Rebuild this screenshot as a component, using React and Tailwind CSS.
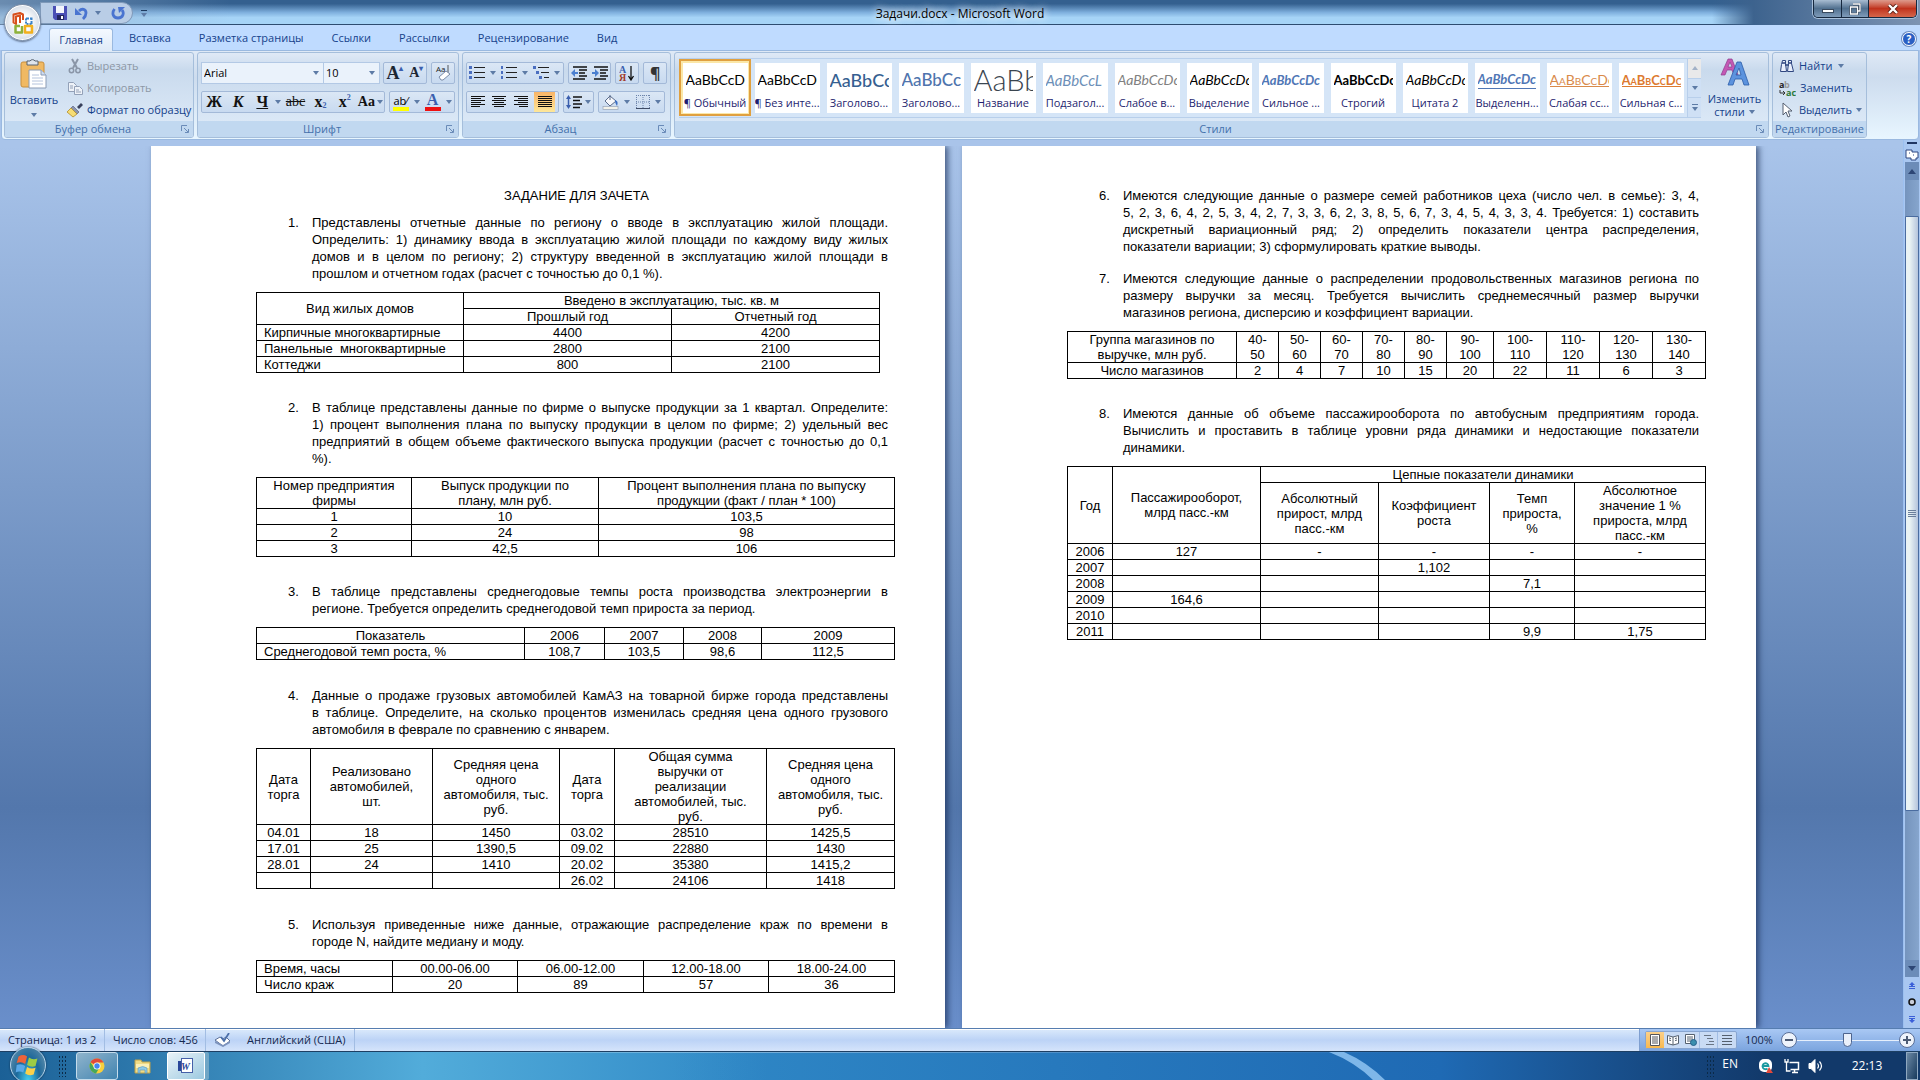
import React from "react";

const ui = "font-['Open_Sans',sans-serif]";

const tabs = ["Вставка", "Разметка страницы", "Ссылки", "Рассылки", "Рецензирование", "Вид"];

const styleTiles = [
  { label: "¶ Обычный", sample: "AaBbCcDc", look: "text-[14px] text-black", active: true },
  { label: "¶ Без инте...", sample: "AaBbCcDc", look: "text-[14px] text-black" },
  { label: "Заголово...", sample: "AaBbCc", look: "text-[18px] font-medium text-[#365f91]" },
  { label: "Заголово...", sample: "AaBbCc", look: "text-[17px] font-medium text-[#4f74ad]" },
  { label: "Название", sample: "AaBb", look: "text-[29px] font-light text-[#3a4550]" },
  { label: "Подзагол...", sample: "AaBbCcL", look: "text-[15px] italic text-[#6d8fb8]" },
  { label: "Слабое в...", sample: "AaBbCcDc", look: "text-[14px] italic text-[#808080]" },
  { label: "Выделение", sample: "AaBbCcDc", look: "text-[14px] italic text-black" },
  { label: "Сильное ...", sample: "AaBbCcDc", look: "text-[13px] italic font-bold text-[#4f76b5]" },
  { label: "Строгий", sample: "AaBbCcDc", look: "text-[13px] font-bold text-black" },
  { label: "Цитата 2", sample: "AaBbCcDc", look: "text-[14px] italic text-black" },
  { label: "Выделенн...", sample: "AaBbCcDc", look: "text-[13px] italic font-bold text-[#4f76b5] border-b border-[#4f76b5]" },
  { label: "Слабая сс...", sample: "AaBbCcDc", look: "text-[14px] [font-variant:small-caps] text-[#d98a4a] underline" },
  { label: "Сильная с...", sample: "AaBbCcDc", look: "text-[13px] [font-variant:small-caps] font-bold text-[#dd7a30] underline" },
];

/* ---------- ICONS ---------- */

function Arrow({ className = "" }) {
  return (
    <svg viewBox="0 0 6 4" className={`h-1 w-1.5 shrink-0 ${className}`}>
      <path d="M0 0h6L3 4z" fill="#5d7ba6" />
    </svg>
  );
}

function Lines({ rows, className = "" }) {
  return (
    <svg viewBox="0 0 16 12" className={`h-3 w-4 ${className}`} shapeRendering="crispEdges">
      {rows.map(([x, w], i) => (
        <rect key={i} x={x} y={i * 2} width={w} height="1" fill="#111" />
      ))}
    </svg>
  );
}

function OfficeLogo() {
  return (
    <svg viewBox="0 0 24 24" className="h-6 w-6" fill="none">
      <path d="M12 9V3.500L9 2 2.500 3.500v8L5 13V5.500l4-1V12" stroke="#d8501c" strokeWidth="2" strokeLinejoin="round" />
      <path d="M15 7.500h5.500V13" stroke="#3b83c9" strokeWidth="2" strokeDasharray="3 1" />
      <path d="M15 7.500V13h5.500" stroke="#3b83c9" strokeWidth="2" strokeDasharray="2 1" />
      <path d="M9 15H4.500v6.500H11V15" stroke="#8db13a" strokeWidth="2.500" strokeLinejoin="round" />
      <path d="M14 15h7v6.500h-7z" stroke="#f2b01e" strokeWidth="2.500" strokeLinejoin="round" />
    </svg>
  );
}

function SaveIcon() {
  return (
    <svg viewBox="0 0 14 14" className="h-3.5 w-3.5">
      <path d="M0 0h14v14H2L0 12z" fill="#4a4fb5" />
      <path d="M3 0h8v7H3z" fill="#f3f5fc" />
      <path d="M4 9h7v5H4z" fill="#23265f" />
      <path d="M8 10h2v3H8z" fill="#fff" />
    </svg>
  );
}

function UndoIcon() {
  return (
    <svg viewBox="0 0 14 14" className="h-3.5 w-3.5">
      <path d="M4 5c3-3 7-2 7 2 0 2-1 4-3 6" fill="none" stroke="#4a74d0" strokeWidth="2.800" />
      <path d="M0 2v7h7z" fill="#4a74d0" />
    </svg>
  );
}

function RedoIcon() {
  return (
    <svg viewBox="0 0 14 14" className="h-3.5 w-3.5">
      <path d="M3.500 3C.5 7 2 12 7 12s6.500-5 4-8" fill="none" stroke="#4a74d0" strokeWidth="2.800" />
      <path d="M7 1h7L8 7z" fill="#4a74d0" />
    </svg>
  );
}

function PasteIcon() {
  return (
    <svg viewBox="0 0 28 30" className="h-[30px] w-7">
      <rect x="1" y="3" width="23" height="25" rx="2" fill="#f0b963" stroke="#c98f3c" />
      <path d="M7 2h3a3 3 0 0 1 5 0h3v4H7z" fill="#dfe5ec" stroke="#59636f" />
      <path d="M9 11h12l5 5v13H9z" fill="#fff" stroke="#8a9bb5" />
      <path d="M21 11v5h5" fill="#cfdcf0" stroke="#8a9bb5" />
      <path d="M12 16h7M12 19h11M12 22h11M12 25h11" stroke="#b4c3dc" />
    </svg>
  );
}

function CutIcon() {
  return (
    <svg viewBox="0 0 16 16" className="h-4 w-4" fill="none" stroke="#8a96a8" strokeWidth="1.500">
      <path d="M5 1l5 9M11 1l-5 9" strokeWidth="2" />
      <circle cx="4.500" cy="12.500" r="2.200" />
      <circle cx="11" cy="12.500" r="2.200" />
    </svg>
  );
}

function CopyIcon() {
  return (
    <svg viewBox="0 0 16 16" className="h-4 w-4" fill="#eef2f8" stroke="#93a1b8">
      <path d="M1.500 2.500h5l3 3v6h-8z" />
      <path d="M7.500 6.500h5l3 3v5h-8z" />
      <path d="M3 6h3M3 8h3M9 10h3M9 12h5" />
    </svg>
  );
}

function BrushIcon() {
  return (
    <svg viewBox="0 0 16 16" className="h-4 w-4">
      <path d="M10 5l4-4 2 2-4 4z" fill="#39415c" />
      <path d="M6 4l6 6-2 2-6-6z" fill="#8c95ad" stroke="#50587a" strokeWidth=".6" />
      <path d="M4 6l6 6-4 3-6-5z" fill="#f6dd74" stroke="#b28d2a" strokeWidth=".8" />
    </svg>
  );
}

function EraserIcon() {
  return (
    <svg viewBox="0 0 18 18" className="h-[18px] w-[18px]">
      <text x="2" y="8" fontSize="8" fill="#222" fontFamily="Open Sans">Aa</text>
      <path d="M14 1v8" stroke="#333" strokeWidth=".8" />
      <path d="M5 13l7-6 4 3-7 6H7z" fill="#fff" stroke="#7a8ba8" />
    </svg>
  );
}

function BulletIcon({ numbered, multi }) {
  return (
    <svg viewBox="0 0 16 14" className="h-3.5 w-4" shapeRendering="crispEdges">
      {[1, 6, 11].map((y, i) => (
        <g key={y}>
          <rect x={multi ? i * 3 : 0} y={y - 1} width={numbered ? 2 : 3} height="3" fill="#4a6ec0" />
          <rect x={multi ? 5 + i * 3 : 5} y={y} width={multi ? 11 - i * 3 : 11} height="1" fill="#222" />
        </g>
      ))}
    </svg>
  );
}

function IndentIcon({ right }) {
  return (
    <svg viewBox="0 0 16 14" className="h-3.5 w-4">
      <path d="M2 1h14M8 4h8M8 7h6M8 10h8M2 13h12" stroke="#111" strokeWidth="1.500" />
      <path d={right ? "M0 6h3V3l4 4-4 4V8H0z" : "M7 6H4V3L0 7l4 4V8h3z"} fill="#4a7fd0" />
    </svg>
  );
}

function SortIcon() {
  return (
    <svg viewBox="0 0 16 16" className="h-4 w-4">
      <text x="0" y="8" fontSize="10" fontWeight="bold" fill="#3b5fae" fontFamily="Liberation Serif">А</text>
      <text x="0" y="16" fontSize="10" fontWeight="bold" fill="#a13a2c" fontFamily="Liberation Serif">Я</text>
      <path d="M12 1v13M9.500 11l2.500 4 2.500-4" fill="none" stroke="#111" strokeWidth="1.300" />
    </svg>
  );
}

function SpacingIcon() {
  return (
    <svg viewBox="0 0 16 16" className="h-4 w-4">
      <path d="M2.500 3v10" stroke="#3b5fae" strokeWidth="1.500" />
      <path d="M0 5l2.500-4L5 5zM0 11l2.500 4L5 11z" fill="#3b5fae" />
      <path d="M7 3h9M7 6.500h7M7 10h9M7 13.500h7" stroke="#111" strokeWidth="1.300" />
    </svg>
  );
}

function BucketIcon() {
  return (
    <svg viewBox="0 0 17 16" className="h-4 w-[17px]">
      <path d="M3 7l5-5 6 5-6 5z" fill="#f6f8fc" stroke="#5a6b8a" />
      <path d="M8 1v5" stroke="#5a6b8a" />
      <path d="M13 6c3 1 3 3 2 6-1-2-2-3-2-6z" fill="#3b6ec4" />
      <rect x="1" y="12.500" width="15" height="3" fill="#f2f2ea" stroke="#98a4b8" strokeWidth=".7" />
    </svg>
  );
}

function BorderIcon() {
  return (
    <svg viewBox="0 0 14 14" className="h-3.5 w-3.5">
      <path d="M.5 0v14M7 0v14M13.500 0v14M0 .5h14M0 7h14" stroke="#6d84ab" strokeDasharray="1 1" />
      <path d="M0 13.500h14" stroke="#3f4c66" />
    </svg>
  );
}

function ChangeStylesIcon() {
  return (
    <svg viewBox="0 0 30 28" className="h-7 w-[30px]">
      <path d="M1 17L8 1h4l6 16h-4l-2-5H7l-2 5zM8 9h4l-2-5z" fill="#c458b4" stroke="#8d3d8e" strokeWidth=".7" />
      <path d="M8 27L17 4h4l8 23h-5l-2-6h-7l-2 6zM16 17h5l-2-7z" fill="#5c93de" stroke="#2c5da8" strokeWidth=".8" />
    </svg>
  );
}

function BinocularsIcon() {
  return (
    <svg viewBox="0 0 16 16" className="h-4 w-4" fill="#e8eefb" stroke="#2f4680">
      <path d="M3.500 2.500h3v3l1 8h-6l1-7zM9.500 2.500h3v3l2 8h-6l1-8z" />
      <path d="M6 7h4M3 5h4M9 5h4" strokeWidth="1.500" />
    </svg>
  );
}

function ReplaceIcon() {
  return (
    <svg viewBox="0 0 17 17" className="h-[17px] w-[17px]" fontFamily="Open Sans" fontWeight="bold" fontSize="9">
      <text x="0" y="8" fill="#222">a</text>
      <text x="5" y="8" fill="#999">b</text>
      <text x="7" y="16" fill="#2b7a3a">ac</text>
      <path d="M1 10v3h5M4 11l2 2-2 2" fill="none" stroke="#333" />
    </svg>
  );
}

function CursorIcon() {
  return (
    <svg viewBox="0 0 16 16" className="h-4 w-4">
      <path d="M4 1v12l3-3 2 5 2-1-2-5h4z" fill="#fff" stroke="#555f70" />
    </svg>
  );
}

function Launcher() {
  return (
    <svg viewBox="0 0 8 8" className="h-2 w-2" fill="none" stroke="#6a8bb8">
      <path d="M.5 6V.5H6M3 3l4 4M7.500 4v3.500H4" />
    </svg>
  );
}

/* ---------- RIBBON ---------- */

function Group({ title, launcher, className = "", children }) {
  return (
    <section
      className={`flex shrink-0 flex-col overflow-hidden rounded-[3px] border border-[#a5bedb] bg-linear-to-b from-[#dfe9f6] from-0% via-[#c9daed] via-20% to-[#e0ecf9] ${className}`}
    >
      <div className="min-h-0 flex-1">{children}</div>
      <footer className="flex h-4 items-center bg-[#c1d8f0] text-[11px] text-[#4470ab]">
        <span className="flex-1 text-center whitespace-nowrap">{title}</span>
        {launcher && (
          <button aria-label={`${title}: параметры`} className="mr-1">
            <Launcher />
          </button>
        )}
      </footer>
    </section>
  );
}

function Cluster({ className = "", children }) {
  return (
    <div
      className={`flex h-[22px] items-center justify-around rounded-[2px] border border-[#a3b9d8] bg-linear-to-b from-[#dbe7f5] to-[#c8daf0] ${className}`}
    >
      {children}
    </div>
  );
}

function Tool({ label, className = "", children }) {
  return (
    <button aria-label={label} className={`flex h-5 items-center justify-center ${className}`}>
      {children}
    </button>
  );
}

function Clipboard() {
  return (
    <Group title="Буфер обмена" launcher className="w-[190px]">
      <div className="flex pt-0.5">
        <button className="flex w-[58px] flex-col items-center pt-1 text-[11px] text-[#15428b]">
          <PasteIcon />
          <span className="mt-0.5 leading-[18px]">Вставить</span>
          <Arrow className="mt-1" />
        </button>
        <div className="flex flex-col pl-1 text-[11px] text-[#15428b]">
          <button className="flex h-[22px] items-center gap-1 text-[#8d97a5]">
            <CutIcon /> Вырезать
          </button>
          <button className="flex h-[22px] items-center gap-1 text-[#8d97a5]">
            <CopyIcon /> Копировать
          </button>
          <button className="flex h-[22px] items-center gap-1 whitespace-nowrap">
            <BrushIcon /> Формат по образцу
          </button>
        </div>
      </div>
    </Group>
  );
}

function Combo({ label, value, className = "" }) {
  return (
    <label className={`relative flex h-[22px] items-center border border-[#b3c9e5] bg-[#eaf2fb] ${className}`}>
      <select aria-label={label} className="h-5 w-full appearance-none pl-0.5 text-[11px] text-black">
        <option>{value}</option>
      </select>
      <Arrow className="absolute right-1" />
    </label>
  );
}

function FontGroup() {
  return (
    <Group title="Шрифт" launcher className="w-[262px]">
      <div className="flex flex-col gap-[7px] px-[3px] pt-[9px]">
        <div className="flex">
          <Combo label="Шрифт" value="Arial" className="w-[124px]" />
          <Combo label="Размер шрифта" value="10" className="w-14 border-l-0" />
          <Cluster className="ml-[3px] w-[45px] font-['Liberation_Serif',serif] font-bold text-[#1d2733]">
            <Tool label="Увеличить размер">
              <span className="text-lg">A</span>
              <span className="self-start text-[8px] text-[#3b5fae]">▴</span>
            </Tool>
            <Tool label="Уменьшить размер">
              <span className="text-sm">A</span>
              <span className="self-start text-[8px] text-[#3b5fae]">▾</span>
            </Tool>
          </Cluster>
          <Cluster className="ml-1 w-6">
            <Tool label="Очистить формат">
              <EraserIcon />
            </Tool>
          </Cluster>
        </div>
        <div className="flex gap-1">
          <Cluster className="w-[184px] font-['Liberation_Serif',serif] text-base text-[#111]">
            <Tool label="Полужирный" className="w-[22px] font-bold">Ж</Tool>
            <Tool label="Курсив" className="w-[22px] font-bold italic">К</Tool>
            <Tool label="Подчеркнутый" className="w-[22px] font-bold underline">Ч</Tool>
            <Arrow />
            <Tool label="Зачеркнутый" className="w-6 text-sm line-through">abc</Tool>
            <Tool label="Подстрочный" className="w-[22px] font-bold">
              x<span className="self-end text-[8px] text-[#3b5fae]">2</span>
            </Tool>
            <Tool label="Надстрочный" className="w-[22px] font-bold">
              x<span className="self-start text-[8px] text-[#3b5fae]">2</span>
            </Tool>
            <Tool label="Регистр" className="gap-0.5 text-sm font-bold">
              Aa <Arrow />
            </Tool>
          </Cluster>
          <Cluster className="flex-1">
            <Tool label="Выделение цветом" className="flex-col">
              <span className="text-[11px] leading-[13px] text-black">ab⁄</span>
              <span className="h-1 w-4 bg-[#ffff00]" />
            </Tool>
            <Arrow />
            <Tool label="Цвет текста" className="flex-col font-['Liberation_Serif',serif] font-bold">
              <span className="text-base leading-[14px] text-[#3b5fae]">A</span>
              <span className="h-1 w-4 bg-[#ee1111]" />
            </Tool>
            <Arrow />
          </Cluster>
        </div>
      </div>
    </Group>
  );
}

function ParagraphGroup() {
  const full = [[1, 14], [1, 14], [1, 14], [1, 14], [1, 14], [1, 14]];
  return (
    <Group title="Абзац" launcher className="w-[209px]">
      <div className="flex flex-col gap-[7px] px-[3px] pt-[9px]">
        <div className="flex gap-1">
          <Cluster className="w-[99px]">
            <Tool label="Маркеры"><BulletIcon /></Tool>
            <Arrow />
            <Tool label="Нумерация"><BulletIcon numbered /></Tool>
            <Arrow />
            <Tool label="Многоуровневый список"><BulletIcon multi /></Tool>
            <Arrow />
          </Cluster>
          <Cluster className="w-11">
            <Tool label="Уменьшить отступ"><IndentIcon /></Tool>
            <Tool label="Увеличить отступ"><IndentIcon right /></Tool>
          </Cluster>
          <Cluster className="w-6">
            <Tool label="Сортировка"><SortIcon /></Tool>
          </Cluster>
          <Cluster className="w-6">
            <Tool label="Знаки абзаца" className="text-base font-bold text-[#333]">¶</Tool>
          </Cluster>
        </div>
        <div className="flex gap-1">
          <Cluster className="w-[93px]">
            <Tool label="По левому краю">
              <Lines rows={[[1, 14], [1, 10], [1, 14], [1, 10], [1, 14], [1, 9]]} />
            </Tool>
            <Tool label="По центру">
              <Lines rows={[[1, 14], [3, 10], [1, 14], [3, 10], [1, 14], [3, 10]]} />
            </Tool>
            <Tool label="По правому краю">
              <Lines rows={[[1, 14], [5, 10], [1, 14], [5, 10], [1, 14], [6, 9]]} />
            </Tool>
            <Tool label="По ширине" className="w-[21px] bg-linear-to-b from-[#f9b466] to-[#fde79a]">
              <Lines rows={full} />
            </Tool>
          </Cluster>
          <Cluster className="w-[31px]">
            <Tool label="Интервал"><SpacingIcon /></Tool>
            <Arrow />
          </Cluster>
          <Cluster className="w-[67px]">
            <Tool label="Заливка"><BucketIcon /></Tool>
            <Arrow />
            <Tool label="Границы"><BorderIcon /></Tool>
            <Arrow />
          </Cluster>
        </div>
      </div>
    </Group>
  );
}

function StylesGroup() {
  return (
    <Group title="Стили" launcher className="w-[1095px]">
      <div className="flex h-full">
        <div className="ml-1 mt-[5px] flex h-[60px] min-w-0 border-y border-[#b8cfeb] bg-[#d5e5f7]">
          <div className="flex overflow-hidden">
            {styleTiles.map((s, i) => (
              <button
                key={i}
                className={`h-[57px] w-[72px] shrink-0 p-px ${
                  s.active ? "border-2 border-[#e0a040] bg-[#fbe7a8]" : "border-2 border-transparent"
                }`}
              >
                <span className="mx-auto flex h-[50px] w-[65px] flex-col overflow-hidden bg-white pt-0.5 text-[#1f1f6f]">
                  <span className="flex h-[30px] w-[59px] items-center self-center overflow-hidden">
                    <span className={`font-['Lato',sans-serif] leading-[18px] whitespace-nowrap ${s.look}`}>
                      {s.sample}
                    </span>
                  </span>
                  <span className="text-center text-[11px] leading-4 whitespace-nowrap">{s.label}</span>
                </span>
              </button>
            ))}
          </div>
          <div className="flex w-3.5 shrink-0 flex-col border-l border-[#b8cfeb]">
            <button aria-label="Вверх" className="flex flex-1 items-center justify-center bg-[#e9e9ea]">
              <Arrow className="rotate-180 opacity-50" />
            </button>
            <button aria-label="Вниз" className="flex flex-1 items-center justify-center border-y border-[#b8cfeb] bg-[#cfe0f5]">
              <Arrow />
            </button>
            <button aria-label="Дополнительно" className="flex flex-1 flex-col items-center justify-center gap-0.5 bg-[#cfe0f5]">
              <span className="h-px w-1.5 bg-[#5d7ba6]" />
              <Arrow />
            </button>
          </div>
        </div>
        <button className="flex flex-1 flex-col items-center pt-[5px] text-[11px] leading-[13px] text-[#15428b]">
          <ChangeStylesIcon />
          <span className="mt-1.5">Изменить</span>
          <span className="flex items-center gap-1">
            стили <Arrow />
          </span>
        </button>
      </div>
    </Group>
  );
}

function EditingGroup() {
  return (
    <Group title="Редактирование" className="w-[95px]">
      <div className="flex flex-col pt-0.5 pl-1.5 text-[11px] text-[#15428b]">
        <button className="flex h-[22px] items-center gap-1">
          <BinocularsIcon /> Найти <Arrow className="ml-0.5" />
        </button>
        <button className="flex h-[22px] items-center gap-1">
          <ReplaceIcon /> Заменить
        </button>
        <button className="flex h-[22px] items-center gap-1">
          <CursorIcon /> Выделить <Arrow />
        </button>
      </div>
    </Group>
  );
}

/* ---------- WINDOW HEADER ---------- */

function TitleBar() {
  return (
    <header className="relative flex h-[25px] shrink-0 items-start bg-linear-to-b from-[#34608f] from-15% via-[#7fb0de] via-50% to-[#a6d4f7] to-70% shadow-[inset_0_-1px_0_#2d4c70]">
      <div className="absolute inset-0 bg-linear-to-r from-[#8fa9c6]/60 via-transparent via-12% to-transparent" />
      <div className="absolute inset-y-0 right-0 w-52 bg-linear-to-r from-transparent via-[#3d638e] via-20% to-[#7d94b3]" />
      <div className="relative ml-10 mt-0.5 flex h-[22px] w-[93px] items-center rounded-r-full border border-[#7f99b9] bg-[#b9cde6] pl-3">
        <button aria-label="Сохранить"><SaveIcon /></button>
        <button aria-label="Отменить" className="ml-2"><UndoIcon /></button>
        <Arrow className="ml-1.5" />
        <button aria-label="Повторить" className="ml-2.5"><RedoIcon /></button>
      </div>
      <button aria-label="Настройка панели" className="relative mt-2.5 ml-2 flex flex-col items-center gap-0.5">
        <span className="h-px w-1.5 bg-[#1d3a5f]" />
        <Arrow />
      </button>
      <h1 className="absolute inset-x-0 top-1 text-center text-xs leading-5 text-black [text-shadow:0_0_8px_#fff,0_0_8px_#fff]">
        Задачи.docx - Microsoft Word
      </h1>
      <div className="absolute top-0 right-[3px] flex h-[18px] overflow-hidden rounded-b-[5px] border border-t-0 border-[#16283f] shadow-[0_0_0_1px_#a8c0da]">
        <button aria-label="Свернуть" className="flex w-7 items-end justify-center border-r border-[#16283f] bg-linear-to-b from-[#a9bdd2] via-[#51708f] to-[#7f9cba] pb-1">
          <span className="h-1 w-3 border border-[#3a4a5e] bg-white" />
        </button>
        <button aria-label="Восстановить" className="flex w-[27px] items-center justify-center border-r border-[#16283f] bg-linear-to-b from-[#a9bdd2] via-[#51708f] to-[#7f9cba]">
          <svg viewBox="0 0 12 12" className="h-3 w-3" fill="none">
            <path d="M4 1h7v7H9M1.500 4h7v7h-7z" stroke="#2d3d52" strokeWidth="2.500" />
            <path d="M4 1h7v7H9M1.500 4h7v7h-7z" stroke="#fff" strokeWidth="1.300" />
          </svg>
        </button>
        <button aria-label="Закрыть" className="flex w-[47px] items-center justify-center bg-linear-to-b from-[#dd9a8c] via-[#c0321c] to-[#d5654a]">
          <svg viewBox="0 0 12 10" className="h-2.5 w-3">
            <path d="M2 1l8 8M10 1L2 9" stroke="#5c1d12" strokeWidth="4" />
            <path d="M2 1l8 8M10 1L2 9" stroke="#fff" strokeWidth="2.400" />
          </svg>
        </button>
      </div>
      <button
        aria-label="Кнопка Office"
        className="absolute top-1 left-1 z-10 flex h-[37px] w-[37px] items-center justify-center rounded-full border border-[#7d8fa8] bg-radial from-white from-30% to-[#b9c6d6] shadow-[inset_0_0_0_1px_#fff,0_1px_2px_#5a6c88]"
      >
        <OfficeLogo />
      </button>
    </header>
  );
}

function TabRow() {
  return (
    <nav className="flex h-[25px] shrink-0 items-end bg-[#bfdbff] pl-[49px] text-[11px] text-[#15428b]">
      <button className="z-[1] mr-0.5 -mb-px h-[23px] w-16 rounded-t-[3px] border border-b-0 border-[#9ab9e0] bg-linear-to-b from-[#f4f9ff] to-[#dfeaf7]">
        Главная
      </button>
      {tabs.map((t) => (
        <button key={t} className="h-[23px] px-3.5">
          {t}
        </button>
      ))}
      <button
        aria-label="Справка"
        className="mr-1 mb-1 ml-auto flex h-3.5 w-3.5 items-center justify-center rounded-full border border-white bg-[#2a5fc4] text-[10px] leading-none font-bold text-white shadow-[0_0_0_1px_#6d8cc0]"
      >
        ?
      </button>
    </nav>
  );
}

/* ---------- DOCUMENT ---------- */

function Task({ n, lines, className = "" }) {
  return (
    <div className={`flex pr-[57px] leading-[17px] ${className}`}>
      <span className="ml-8 w-6 shrink-0">{n}.</span>
      <p className="flex-1">
        {lines.map((l, i) => (
          <span
            key={i}
            className={`block whitespace-nowrap ${i < lines.length - 1 ? "[text-align-last:justify]" : ""}`}
          >
            {l}{" "}
          </span>
        ))}
      </p>
    </div>
  );
}

// A cell is a string, or { t, rs, cs, left } when it spans or aligns left
function DocTable({ cols, rows, className = "" }) {
  const total = cols.reduce((a, b) => a + b, 0);
  return (
    <table className={`table-fixed border-collapse text-center leading-[15px] ${className}`} style={{ width: total }}>
      <colgroup>
        {cols.map((w, i) => (
          <col key={i} style={{ width: w }} />
        ))}
      </colgroup>
      <tbody>
        {rows.map((row, r) => (
          <tr key={r} className="h-4">
            {row.map((c, i) => {
              const cell = typeof c === "string" ? { t: c } : c;
              return (
                <td
                  key={i}
                  rowSpan={cell.rs}
                  colSpan={cell.cs}
                  className={`border border-black align-middle whitespace-pre ${cell.left ? "pl-[7px] text-left" : ""}`}
                >
                  {cell.t}
                </td>
              );
            })}
          </tr>
        ))}
      </tbody>
    </table>
  );
}

function Page({ children }) {
  return (
    <article className="w-[794px] shrink-0 bg-white pt-[41px] pl-[105px] font-['Liberation_Sans',Arial,sans-serif] text-[13px] text-black shadow-[3px_0_6px_rgba(20,40,80,0.65)]">
      {children}
    </article>
  );
}

function PageOne() {
  return (
    <Page>
      <h2 className="pr-12 text-center leading-[17px]">ЗАДАНИЕ ДЛЯ ЗАЧЕТА</h2>
      <Task
        n={1}
        className="mt-2.5"
        lines={[
          "Представлены отчетные данные по региону о вводе в эксплуатацию жилой площади.",
          "Определить: 1) динамику ввода в эксплуатацию жилой площади по каждому виду жилых",
          "домов и в целом по региону; 2) структуру введенной в эксплуатацию жилой площади в",
          "прошлом и отчетном годах (расчет с точностью до 0,1 %).",
        ]}
      />
      <DocTable
        className="mt-2.5"
        cols={[207, 208, 208]}
        rows={[
          [{ t: "Вид жилых домов", rs: 2 }, { t: "Введено в эксплуатацию, тыс. кв. м", cs: 2 }],
          ["Прошлый год", "Отчетный год"],
          [{ t: "Кирпичные многоквартирные", left: true }, "4400", "4200"],
          [{ t: "Панельные  многоквартирные", left: true }, "2800", "2100"],
          [{ t: "Коттеджи", left: true }, "800", "2100"],
        ]}
      />
      <Task
        n={2}
        className="mt-[26px]"
        lines={[
          "В таблице представлены данные по фирме о выпуске продукции за 1 квартал. Определите:",
          "1) процент выполнения плана по выпуску продукции в целом по фирме; 2) удельный вес",
          "предприятий в общем объеме фактического выпуска продукции (расчет с точностью до 0,1",
          "%).",
        ]}
      />
      <DocTable
        className="mt-2.5"
        cols={[155, 187, 296]}
        rows={[
          ["Номер предприятия\nфирмы", "Выпуск продукции по\nплану, млн руб.", "Процент выполнения плана по выпуску\nпродукции (факт / план * 100)"],
          ["1", "10", "103,5"],
          ["2", "24", "98"],
          ["3", "42,5", "106"],
        ]}
      />
      <Task
        n={3}
        className="mt-[26px]"
        lines={[
          "В таблице представлены среднегодовые темпы роста производства электроэнергии в",
          "регионе. Требуется определить среднегодовой темп прироста за период.",
        ]}
      />
      <DocTable
        className="mt-2.5"
        cols={[268, 80, 79, 78, 133]}
        rows={[
          ["Показатель", "2006", "2007", "2008", "2009"],
          [{ t: "Среднегодовой темп роста, %", left: true }, "108,7", "103,5", "98,6", "112,5"],
        ]}
      />
      <Task
        n={4}
        className="mt-[27px]"
        lines={[
          "Данные о продаже грузовых автомобилей КамАЗ на товарной бирже города представлены",
          "в таблице. Определите, на сколько процентов изменилась средняя цена одного грузового",
          "автомобиля в феврале по сравнению с январем.",
        ]}
      />
      <DocTable
        className="mt-2.5"
        cols={[54, 122, 127, 55, 152, 128]}
        rows={[
          [
            "Дата\nторга",
            "Реализовано\nавтомобилей,\nшт.",
            "Средняя цена\nодного\nавтомобиля, тыс.\nруб.",
            "Дата\nторга",
            "Общая сумма\nвыручки от\nреализации\nавтомобилей, тыс.\nруб.",
            "Средняя цена\nодного\nавтомобиля, тыс.\nруб.",
          ],
          ["04.01", "18", "1450", "03.02", "28510", "1425,5"],
          ["17.01", "25", "1390,5", "09.02", "22880", "1430"],
          ["28.01", "24", "1410", "20.02", "35380", "1415,2"],
          ["", "", "", "26.02", "24106", "1418"],
        ]}
      />
      <Task
        n={5}
        className="mt-[27px]"
        lines={[
          "Используя приведенные ниже данные, отражающие распределение краж по времени в",
          "городе N, найдите медиану и моду.",
        ]}
      />
      <DocTable
        className="mt-2.5"
        cols={[136, 125, 126, 125, 126]}
        rows={[
          [{ t: "Время, часы", left: true }, "00.00-06.00", "06.00-12.00", "12.00-18.00", "18.00-24.00"],
          [{ t: "Число краж", left: true }, "20", "89", "57", "36"],
        ]}
      />
    </Page>
  );
}

function PageTwo() {
  return (
    <Page>
      <Task
        n={6}
        lines={[
          "Имеются следующие данные о размере семей работников цеха (число чел. в семье): 3, 4,",
          "5, 2, 3, 6, 4, 2, 5, 3, 4, 2, 7, 3, 3, 6, 2, 3, 8, 5, 6, 7, 3, 4, 5, 4, 3, 3, 4. Требуется: 1) составить",
          "дискретный вариационный ряд; 2) определить показатели центра распределения,",
          "показатели вариации;  3) сформулировать краткие выводы.",
        ]}
      />
      <Task
        n={7}
        className="mt-[15px]"
        lines={[
          "Имеются следующие данные о распределении продовольственных магазинов региона по",
          "размеру выручки за месяц. Требуется вычислить среднемесячный размер выручки",
          "магазинов региона, дисперсию и коэффициент вариации.",
        ]}
      />
      <DocTable
        className="mt-2.5"
        cols={[169, 42, 42, 42, 42, 42, 47, 53, 53, 53, 53]}
        rows={[
          ["Группа магазинов по\nвыручке, млн руб.", "40-\n50", "50-\n60", "60-\n70", "70-\n80", "80-\n90", "90-\n100", "100-\n110", "110-\n120", "120-\n130", "130-\n140"],
          ["Число магазинов", "2", "4", "7", "10", "15", "20", "22", "11", "6", "3"],
        ]}
      />
      <Task
        n={8}
        className="mt-[26px]"
        lines={[
          "Имеются данные об объеме пассажирооборота по автобусным предприятиям города.",
          "Вычислить и проставить в таблице уровни ряда динамики и недостающие показатели",
          "динамики.",
        ]}
      />
      <DocTable
        className="mt-2.5"
        cols={[45, 148, 118, 111, 85, 131]}
        rows={[
          [{ t: "Год", rs: 2 }, { t: "Пассажирооборот,\nмлрд пасс.-км", rs: 2 }, { t: "Цепные показатели динамики", cs: 4 }],
          ["Абсолютный\nприрост, млрд\nпасс.-км", "Коэффициент\nроста", "Темп\nприроста,\n%", "Абсолютное\nзначение 1 %\nприроста, млрд\nпасс.-км"],
          ["2006", "127", "-", "-", "-", "-"],
          ["2007", "", "", "1,102", "", ""],
          ["2008", "", "", "", "7,1", ""],
          ["2009", "164,6", "", "", "", ""],
          ["2010", "", "", "", "", ""],
          ["2011", "", "", "", "9,9", "1,75"],
        ]}
      />
    </Page>
  );
}

function ScrollBar() {
  return (
    <aside className="flex w-[17px] shrink-0 flex-col items-center border-l border-[#9cc0f0] bg-[#a9c7f1]">
      <span className="mt-0.5 h-0.5 w-2.5 shrink-0 bg-[#1f3563]" />
      <button aria-label="Линейка" className="mt-1 h-3.5">
        <svg viewBox="0 0 14 12" className="h-3 w-3.5" fill="#fff" stroke="#2f4680">
          <path d="M1 1h6v2h6v6h-2v2H6V9H1z" />
          <path d="M4 4h1M8 6h1" />
        </svg>
      </button>
      <div className="flex w-3.5 flex-1 flex-col bg-linear-to-r from-[#7594bd] to-[#86a5cd]">
        <button aria-label="Прокрутить вверх" className="flex h-[18px] items-center justify-center bg-[#6c8cb8]">
          <svg viewBox="0 0 8 5" className="h-[5px] w-2"><path d="M0 5h8L4 0z" fill="#2d4675" /></svg>
        </button>
        <div className="mt-9 flex h-[73%] flex-col items-center justify-center gap-px rounded-[1px] border border-[#4a6ca0] bg-linear-to-r from-[#eaf3f4] from-30% to-[#b5c4dc]">
          <span className="h-px w-2 bg-[#6b7f9c]" />
          <span className="h-px w-2 bg-[#6b7f9c]" />
          <span className="h-px w-2 bg-[#6b7f9c]" />
          <span className="h-px w-2 bg-[#6b7f9c]" />
        </div>
        <button aria-label="Прокрутить вниз" className="mt-auto flex h-[17px] items-center justify-center bg-[#6c8cb8]">
          <svg viewBox="0 0 8 5" className="h-[5px] w-2"><path d="M0 0h8L4 5z" fill="#2d4675" /></svg>
        </button>
      </div>
      <div className="flex h-[51px] flex-col items-center justify-around">
        <svg viewBox="0 0 6 7" className="h-[7px] w-1.5"><path d="M0 3l3-3 3 3H4v1h2v1H0V4h2V3zM0 6h6v1H0z" fill="#3b5fd8" /></svg>
        <svg viewBox="0 0 8 8" className="h-2 w-2"><circle cx="4" cy="4" r="3" fill="#c9cdd8" stroke="#111" strokeWidth="1.500" /></svg>
        <svg viewBox="0 0 6 7" className="h-[7px] w-1.5"><path d="M0 4l3 3 3-3H4V3h2V2H0v1h2v1zM0 0h6v1H0z" fill="#3b5fd8" /></svg>
      </div>
    </aside>
  );
}

/* ---------- STATUS BAR AND TASKBAR ---------- */

function StatusBar() {
  return (
    <footer className="flex h-[23px] shrink-0 items-stretch border-t border-[#567db0] bg-linear-to-b from-[#dbeafb] via-[#bcd3f6] via-50% to-[#d5e4fb] text-[11px] text-[#15294f] shadow-[inset_0_1px_0_#fff]">
      <span className="flex w-[105px] items-center border-r border-[#a2bde3] pl-2 whitespace-nowrap">Страница: 1 из 2</span>
      <span className="flex w-[101px] items-center border-r border-[#a2bde3] pl-2 whitespace-nowrap">Число слов: 456</span>
      <span className="flex w-[149px] items-center gap-4 border-r border-[#a2bde3] pl-2 whitespace-nowrap">
        <svg viewBox="0 0 17 14" className="h-3.5 w-[17px]">
          <path d="M1 7l5-3 3 2 3-2 4 4-7 5z" fill="#fff" stroke="#5a6f98" />
          <path d="M1 8v2l8 4 7-4V8l-7 4z" fill="#7d93bd" />
          <path d="M7 4l3 4 5-8" fill="none" stroke="#4a6ea8" strokeWidth="1.800" />
        </svg>
        Английский (США)
      </span>
      <div className="ml-auto flex w-[281px] items-center border-l border-[#7f9fd0] bg-linear-to-b from-[#a9c8f4] to-[#7ba4de] pl-[5px]">
        <div className="flex h-[18px] rounded-[2px] border border-[#88a5d0] bg-[#c9dbf4]">
          <button aria-label="Разметка страницы" className="flex w-[18px] items-center justify-center bg-linear-to-b from-[#fbd089] to-[#f8b84e]">
            <svg viewBox="0 0 12 12" className="h-3 w-3" fill="#fff" stroke="#55565c"><path d="M1.500.5h9v11h-9zM3 3h6M3 5h6M3 7h6M3 9h6" /></svg>
          </button>
          <button aria-label="Режим чтения" className="flex w-[18px] items-center justify-center">
            <svg viewBox="0 0 12 12" className="h-3 w-3" fill="#fff" stroke="#55606e"><path d="M.5 1.500L6 3l5.500-1.500v8L6 11 .5 9.500zM6 3v8M2 4l2 .5M2 6l2 .5M8 4.500L10 4M8 6.500L10 6" /></svg>
          </button>
          <button aria-label="Веб-документ" className="flex w-[18px] items-center justify-center border-r border-[#a2bde3]">
            <svg viewBox="0 0 12 12" className="h-3 w-3"><path d="M.5.5h9v9h-9zM2 3h6M2 5h6M2 7h4" fill="#fff" stroke="#55606e" /><circle cx="8.500" cy="8.500" r="3" fill="#3c8fae" stroke="#27618a" /></svg>
          </button>
          <button aria-label="Структура" className="flex w-[18px] items-center justify-center border-r border-[#a2bde3]">
            <svg viewBox="0 0 12 12" className="h-3 w-3" stroke="#6a7686"><path d="M1 1.500h7M4 4.500h6M6 7.500h5M3 10.500h8" /></svg>
          </button>
          <button aria-label="Черновик" className="flex w-[18px] items-center justify-center">
            <svg viewBox="0 0 12 12" className="h-3 w-3" stroke="#55606e"><path d="M1 1.500h10M1 4.500h10M1 7.500h10M1 10.500h10" /></svg>
          </button>
        </div>
        <span className="ml-2">100%</span>
        <button aria-label="Мельче" className="ml-2 flex h-4 w-4 items-center justify-center rounded-full border border-[#5a6f98] bg-[#eef3fb]">
          <span className="h-0.5 w-2 bg-[#4d5b74]" />
        </button>
        <input
          type="range"
          aria-label="Масштаб"
          defaultValue="50"
          className="h-4 w-[102px] appearance-none bg-[linear-gradient(#e6effc,#e6effc)] bg-[length:100%_1px] bg-center bg-no-repeat [&::-webkit-slider-thumb]:h-3.5 [&::-webkit-slider-thumb]:w-[9px] [&::-webkit-slider-thumb]:appearance-none [&::-webkit-slider-thumb]:rounded-b-full [&::-webkit-slider-thumb]:border [&::-webkit-slider-thumb]:border-[#4d648f] [&::-webkit-slider-thumb]:bg-[#e9effa]"
        />
        <button aria-label="Крупнее" className="flex h-4 w-4 items-center justify-center rounded-full border border-[#5a6f98] bg-[#eef3fb]">
          <svg viewBox="0 0 8 8" className="h-2 w-2"><path d="M3 0h2v3h3v2H5v3H3V5H0V3h3z" fill="#4d5b74" /></svg>
        </button>
      </div>
    </footer>
  );
}

function Grip({ className = "" }) {
  return (
    <span
      className={`h-[22px] w-2 bg-[radial-gradient(#0b2a48_1px,transparent_1px)] bg-[length:3px_4px] ${className}`}
    />
  );
}

function TaskBar() {
  return (
    <footer className="relative flex h-[29px] shrink-0 items-center border-t border-[#1d3f63] bg-[#2f88c6] shadow-[inset_0_1px_0_rgba(255,255,255,0.4)]">
      <div className="absolute inset-0 bg-linear-to-r from-[#1b6096] via-[#52acda] via-22% to-transparent to-40%" />
      <div className="absolute inset-0 bg-linear-to-r from-transparent from-35% via-[#1f6ab4] via-75% to-[#12396a] to-92%" />
      <svg viewBox="0 0 62 28" className="absolute left-[69%] h-7 w-[62px]">
        <path d="M4 0q26 10 44 28h12Q42 10 19 0z" fill="#8fc4f2" opacity=".85" />
      </svg>
      <button
        aria-label="Пуск"
        className="absolute -top-[5px] left-2.5 h-9 w-9 overflow-hidden rounded-full border border-[#b6d3e8] bg-radial-[at_50%_100%] from-[#45d3f5] via-[#1c6799] via-50% to-[#6d96b0] shadow-[0_0_2px_#0c2944]"
      >
        <svg viewBox="0 0 36 36" className="h-full w-full">
          <path d="M8 9q5-3 9 0l-2 8q-4-3-9-1z" fill="#ee6338" />
          <path d="M19 10q4 3 9 1l-2 8q-4 2-9-1z" fill="#9ccb45" />
          <path d="M6 18q5-2 9 1l-2 7q-4-2-8 0z" fill="#59a8e8" />
          <path d="M17 20q4 3 9 1l-2 7q-5 2-9-1z" fill="#fbd04a" />
        </svg>
      </button>
      <Grip className="relative ml-[58px]" />
      <button aria-label="Chrome" className="relative ml-2.5 flex h-7 w-[42px] items-center justify-center rounded-[3px] border border-[#c4dcec] bg-linear-to-br from-[#8fb4cc] to-[#3f84b0]">
        <svg viewBox="0 0 16 16" className="h-4 w-4">
          <circle cx="8" cy="8" r="7.500" fill="#f7cf3c" />
          <path d="M8 8L1.500 4.200A7.500 7.500 0 0 1 14.500 4.500H8z" fill="#e04b3a" />
          <path d="M1.500 4.200A7.500 7.500 0 0 0 7 15.400L10.500 9.500 5 9.500z" fill="#45a85a" />
          <circle cx="8" cy="8" r="3.500" fill="#fff" />
          <circle cx="8" cy="8" r="2.700" fill="#4385ee" />
        </svg>
      </button>
      <button aria-label="Проводник" className="relative flex h-7 w-[49px] items-center justify-center">
        <svg viewBox="0 0 17 15" className="h-[15px] w-[17px]">
          <path d="M1 1h6l1 2h8v11H1z" fill="#f0dc86" stroke="#bfa24a" />
          <path d="M2 5h13v4H2z" fill="#fbf0b8" />
          <path d="M4 14V9q5-3 9 0v5h-2v-3H6v3z" fill="#8fcbe8" stroke="#5a96b8" strokeWidth=".6" />
        </svg>
      </button>
      <button aria-label="Word" className="relative flex h-7 w-[38px] items-center justify-center rounded-[2px] border border-white bg-linear-to-br from-[#e9f3f8] to-[#9cc9e0] shadow-[4px_0_0_#6fa6c6]">
        <svg viewBox="0 0 16 16" className="h-4 w-4">
          <rect x="3.500" y=".5" width="11" height="14" fill="#fff" stroke="#4660a8" />
          <rect x="0" y="3" width="3" height="10" fill="#2a4799" />
          <text x="3" y="12" fontSize="10" fontStyle="italic" fontWeight="bold" fill="#2a4799" fontFamily="Liberation Serif">W</text>
        </svg>
      </button>
      <div className="relative ml-auto flex h-full items-center text-xs text-white">
        <Grip className="mr-2" />
        <span className="mb-1 mr-5">EN</span>
        <svg viewBox="0 0 16 16" className="mr-2.5 h-4 w-4">
          <rect x="1" y="1" width="13" height="13" rx="5" fill="#fff" />
          <path d="M4 8h6.500a3 3 0 1 0-1 2.500" fill="none" stroke="#1c9aa0" strokeWidth="1.800" />
          <path d="M11 9l4 6H8z" fill="#e3493b" />
        </svg>
        <svg viewBox="0 0 16 16" className="mr-2 h-4 w-4" fill="none" stroke="#fff">
          <path d="M5.500 4.500h9v7h-8M8 14.500h6M10.500 12v2" strokeWidth="1.500" />
          <path d="M1 1v3h3V1M2.500 4v9h4" strokeWidth="1.300" />
        </svg>
        <svg viewBox="0 0 16 16" className="mr-1 h-4 w-4" fill="none" stroke="#fff">
          <path d="M1 5.500h2l4-4v13l-4-4H1z" fill="#fff" />
          <path d="M9.500 5.500q2 2.500 0 5M11.500 3.500q4 4.500 0 9" strokeWidth="1.200" />
        </svg>
        <time className="w-[78px] text-center">22:13</time>
        <button aria-label="Свернуть все окна" className="mr-0.5 h-7 w-3 border border-[#8fa8c0] bg-linear-to-br from-[#6d8aa6] to-[#173a5c]" />
      </div>
    </footer>
  );
}

export default function App() {
  return (
    <div className={`flex h-screen flex-col overflow-hidden bg-[#a9c4ea] ${ui}`}>
      <TitleBar />
      <TabRow />
      <div className="mx-px flex h-[90px] shrink-0 gap-[3px] rounded-b-[4px] border border-[#9ab9e0] bg-linear-to-b from-[#dfe9f6] via-[#cddcee] via-30% to-[#e8f6ff] px-0.5 py-px">
        <Clipboard />
        <FontGroup />
        <ParagraphGroup />
        <StylesGroup />
        <EditingGroup />
      </div>
      <div className="flex min-h-0 flex-1">
        <main className="mt-[6px] flex min-w-0 flex-1 justify-center gap-[17px] overflow-hidden bg-linear-to-b from-[#a9c4ea] from-0% via-[#5377ac] via-75% to-[#6a8fcb] pl-1">
          <PageOne />
          <PageTwo />
        </main>
        <ScrollBar />
      </div>
      <StatusBar />
      <TaskBar />
    </div>
  );
}
